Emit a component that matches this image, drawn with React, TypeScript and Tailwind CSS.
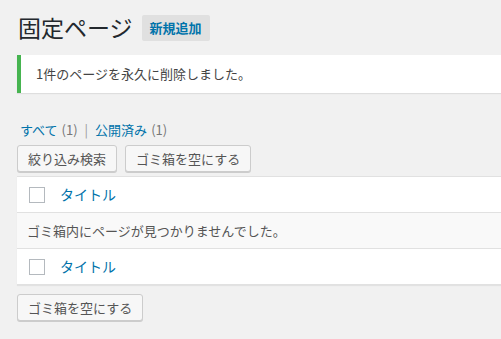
const font = { fontFamily: '"Noto Sans CJK JP", "Noto Sans", sans-serif' };

function Button({ children }: { children: string }) {
    return (
        <button className="h-[27px] px-[10px] border border-[#cccccc] rounded-[3px] bg-[#f7f7f7] text-[13px] leading-[25px] text-[#555555] shadow-[0_1px_0_#cccccc]">
            {children}
        </button>
    );
}

function TitleRow() {
    return (
        <div className="flex items-center h-9 bg-white border-b border-[#e1e1e1]">
            <span className="ml-3 w-4 h-4 border border-[#b4b9be] bg-white" />
            <span className="ml-[15px] text-[14px] text-[#0073aa]">タイトル</span>
        </div>
    );
}

export default function App() {
    return (
        <div className="min-h-[339px] w-[501px] overflow-hidden bg-[#f1f1f1] pt-[11px]" style={font}>
            <div className="flex items-center pl-[18px]">
                <h1 className="text-[23px] leading-[33px] text-[#23282d] font-normal">固定ページ</h1>
                <span className="ml-[9px] h-[26px] px-2 rounded-[2px] bg-[#e0e0e0] text-[13px] font-bold leading-[26px] text-[#0073aa]">
                    新規追加
                </span>
            </div>

            <div className="ml-[17px] mt-[11px] h-[38px] flex items-center bg-white border-l-4 border-[#46b450] shadow-[0_1px_1px_rgba(0,0,0,0.08)] pl-[15px]">
                <p className="text-[13px] text-[#444444]">1件のページを永久に削除しました。</p>
            </div>

            <div className="ml-[20px] mt-[28px] flex items-center text-[13px] leading-[18px] text-[#666666]">
                <span className="text-[#0073aa]">すべて</span>
                <span className="ml-1 text-[#777777]">(1)</span>
                <span className="mx-[7px] text-[#999999]">|</span>
                <span className="text-[#0073aa]">公開済み</span>
                <span className="ml-1 text-[#777777]">(1)</span>
            </div>

            <div className="ml-[17px] mt-[6px] flex gap-2">
                <Button>絞り込み検索</Button>
                <Button>ゴミ箱を空にする</Button>
            </div>

            <div className="ml-[17px] mt-[4px] border-t border-[#e1e1e1] shadow-[0_1px_1px_rgba(0,0,0,0.06)]">
                <TitleRow />
                <div className="h-9 flex items-center bg-[#f9f9f9] border-b border-[#e1e1e1] pl-[10px] text-[13px] text-[#555555]">
                    ゴミ箱内にページが見つかりませんでした。
                </div>
                <TitleRow />
            </div>

            <div className="ml-[17px] mt-[9px]">
                <Button>ゴミ箱を空にする</Button>
            </div>
        </div>
    );
}
